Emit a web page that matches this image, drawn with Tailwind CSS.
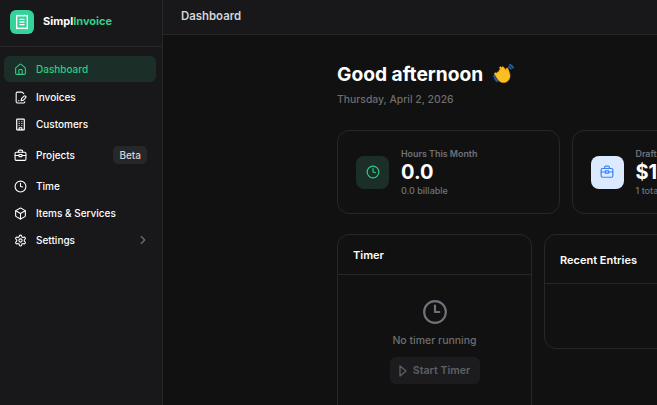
<!DOCTYPE html>
<html><head><meta charset="utf-8"><script src="https://cdn.jsdelivr.net/npm/@tailwindcss/browser@4"></script></head>
<body class="bg-[#111111]">
<div class="flex h-[405px] w-[657px] overflow-hidden bg-[#111111] font-['Inter',sans-serif] text-white">
  <aside class="flex h-full w-[163px] shrink-0 flex-col border-r border-[#27272a] bg-[#18181b]">
    <div class="flex h-[47px] shrink-0 items-center gap-[9px] border-b border-[#27272a] pb-[3px] pl-[10px]">
      <div class="flex h-6 w-6 items-center justify-center rounded-md bg-[#34d399]">
        <svg class="h-4 w-4" viewBox="0 0 24 24" fill="none" stroke="#fff" stroke-width="2" stroke-linecap="round" stroke-linejoin="round"><path d="M4 2v20l2-1 2 1 2-1 2 1 2-1 2 1 2-1 2 1V2l-2 1-2-1-2 1-2-1-2 1-2-1-2 1Z"/><path d="M9 8h6M9 12h6M9 16h6"/></svg>
      </div>
      <div class="text-[11px] font-bold leading-none"><span class="text-white">Simpl</span><span class="text-[#2fd08a]">Invoice</span></div>
    </div>
    <nav class="flex flex-col gap-px pl-1 pr-[6px] pt-[9px] text-[10px] font-medium text-white">
      <a class="flex h-[26px] items-center gap-[9px] rounded-md bg-[#1b2f28] pl-[10px] text-[#2ecc85]">
        <svg class="h-[13px] w-[13px]" viewBox="0 0 24 24" fill="none" stroke="currentColor" stroke-width="2" stroke-linecap="round" stroke-linejoin="round"><path d="M15 21v-8a1 1 0 0 0-1-1h-4a1 1 0 0 0-1 1v8"/><path d="M3 10a2 2 0 0 1 .709-1.528l7-5.999a2 2 0 0 1 2.582 0l7 5.999A2 2 0 0 1 21 10v9a2 2 0 0 1-2 2H5a2 2 0 0 1-2-2z"/></svg>
        Dashboard</a>
      <a class="mt-px flex h-[26px] items-center gap-[9px] pl-[10px]">
        <svg class="h-[13px] w-[13px]" viewBox="0 0 24 24" fill="none" stroke="currentColor" stroke-width="2" stroke-linecap="round" stroke-linejoin="round"><path d="m18 5-2.414-2.414A2 2 0 0 0 14.172 2H6a2 2 0 0 0-2 2v16a2 2 0 0 0 2 2h12a2 2 0 0 0 2-2"/><path d="M21.378 12.626a1 1 0 0 0-3.004-3.004l-4.010 4.012a2 2 0 0 0-.506.854l-.837 2.870a.5.5 0 0 0 .62.62l2.870-.837a2 2 0 0 0 .854-.506z"/><path d="M8 18h1"/></svg>
        Invoices</a>
      <a class="flex h-[26px] items-center gap-[9px] pl-[10px]">
        <svg class="h-[13px] w-[13px]" viewBox="0 0 24 24" fill="none" stroke="currentColor" stroke-width="2.200" stroke-linecap="round" stroke-linejoin="round"><rect x="5" y="2" width="14" height="20" rx="1"/><path d="M9.500 22v-4h5v4M9.500 6h.01M14.500 6h.01M9.500 10h.01M14.500 10h.01M9.500 14h.01M14.500 14h.01"/></svg>
        Customers</a>
      <a class="flex h-[34px] items-center gap-[9px] pl-[10px]">
        <svg class="h-[13px] w-[13px]" viewBox="0 0 24 24" fill="none" stroke="currentColor" stroke-width="2" stroke-linecap="round" stroke-linejoin="round"><path d="M16 6V4a2 2 0 0 0-2-2h-4a2 2 0 0 0-2 2v2"/><rect x="2" y="6" width="20" height="15" rx="2"/><path d="M2 12h7M15 12h7"/><rect x="9" y="10" width="6" height="4" rx="1"/></svg>
        Projects
        <span class="ml-auto mr-[9px] flex h-[18px] items-center rounded-[5px] bg-[#27272a] px-[6px] text-[10px] font-medium text-[#d4d4d8]">Beta</span></a>
      <a class="flex h-[26px] items-center gap-[9px] pl-[10px]">
        <svg class="h-[13px] w-[13px]" viewBox="0 0 24 24" fill="none" stroke="currentColor" stroke-width="2" stroke-linecap="round" stroke-linejoin="round"><circle cx="12" cy="12" r="10"/><path d="M12 6v6l4 1"/></svg>
        Time</a>
      <a class="flex h-[26px] items-center gap-[9px] pl-[10px]">
        <svg class="h-[13px] w-[13px]" viewBox="0 0 24 24" fill="none" stroke="currentColor" stroke-width="2" stroke-linecap="round" stroke-linejoin="round"><path d="M21 8a2 2 0 0 0-1-1.730l-7-4a2 2 0 0 0-2 0l-7 4A2 2 0 0 0 3 8v8a2 2 0 0 0 1 1.730l7 4a2 2 0 0 0 2 0l7-4A2 2 0 0 0 21 16Z"/><path d="m3.300 7 8.700 5 8.700-5M12 22V12"/></svg>
        Items &amp; Services</a>
      <a class="flex h-[26px] items-center gap-[9px] pl-[10px]">
        <svg class="h-[13px] w-[13px]" viewBox="0 0 24 24" fill="none" stroke="currentColor" stroke-width="2" stroke-linecap="round" stroke-linejoin="round"><path d="M12.220 2h-.44a2 2 0 0 0-2 2v.18a2 2 0 0 1-1 1.730l-.43.25a2 2 0 0 1-2 0l-.15-.08a2 2 0 0 0-2.730.73l-.22.38a2 2 0 0 0 .73 2.730l.15.1a2 2 0 0 1 1 1.720v.51a2 2 0 0 1-1 1.740l-.15.09a2 2 0 0 0-.73 2.730l.22.38a2 2 0 0 0 2.730.73l.15-.08a2 2 0 0 1 2 0l.43.25a2 2 0 0 1 1 1.730V20a2 2 0 0 0 2 2h.44a2 2 0 0 0 2-2v-.18a2 2 0 0 1 1-1.730l.43-.25a2 2 0 0 1 2 0l.15.08a2 2 0 0 0 2.730-.73l.22-.39a2 2 0 0 0-.73-2.730l-.15-.08a2 2 0 0 1-1-1.740v-.5a2 2 0 0 1 1-1.740l.15-.09a2 2 0 0 0 .73-2.730l-.22-.38a2 2 0 0 0-2.730-.73l-.15.08a2 2 0 0 1-2 0l-.43-.25a2 2 0 0 1-1-1.730V4a2 2 0 0 0-2-2z"/><circle cx="12" cy="12" r="3"/></svg>
        Settings
        <svg class="ml-auto mr-[6px] h-[14px] w-[14px] text-[#71717a]" viewBox="0 0 24 24" fill="none" stroke="currentColor" stroke-width="2" stroke-linecap="round" stroke-linejoin="round"><path d="m9 18 6-6-6-6"/></svg></a>
    </nav>
  </aside>
  <main class="flex min-w-0 flex-1 flex-col">
    <header class="flex h-[35px] shrink-0 items-center border-b border-[#27272a] bg-[#18181b] pb-px pl-[18px] text-[11.400px] font-semibold text-[#d4d4d8]">Dashboard</header>
    <div class="flex w-[700px] flex-col pl-[174px] pt-[27px]">
      <h1 class="flex items-center gap-[10px] text-[19.200px] leading-[24px] font-bold text-white">Good afternoon
        <svg class="h-[21px] w-[21px]" viewBox="1 1 17.500 17.500"><path d="M2 11c.3 2 1.200 3.400 2.600 4.400M4 10.500c.2 1 .6 2 1.300 2.800M15 1.600c1.200.4 2.200 1.300 2.700 2.500M14.300 3.400c.7.3 1.300.8 1.600 1.500" fill="none" stroke="#1f5fa8" stroke-width="1.500" stroke-linecap="round"/><path d="M6.300 6.900c-.6-.8.5-1.700 1.200-1l-.9-1.300c-.6-.9.7-1.800 1.300-.9l.5.7c-.5-.8.7-1.700 1.300-.9l2.300 3c-.2-1.200-.3-2 .6-2.200.8-.1 1 .7 1.300 1.700.5 1.600 1.700 3.700 1.200 6-.6 3-3.500 5-6.300 4.400-2.200-.4-3.400-2.100-4-3l-2.500-3.800c-.6-.9.700-1.800 1.300-.9z" fill="#fbbf24" stroke="#f59e0b" stroke-width=".5"/></svg></h1>
      <p class="mt-[7px] text-[10.400px] leading-[14px] font-medium text-[#6e6e6e]">Thursday, April 2, 2026</p>
      <div class="mt-[23px] flex gap-3">
        <div class="flex h-[84px] w-[223px] shrink-0 items-center gap-3 rounded-xl border border-[#27272a] pl-[18px]">
          <div class="flex h-[33px] w-[33px] items-center justify-center rounded-lg bg-[#1b2f28]">
            <svg class="h-[14px] w-[14px]" viewBox="0 0 24 24" fill="none" stroke="#2ecc85" stroke-width="2" stroke-linecap="round" stroke-linejoin="round"><circle cx="12" cy="12" r="10"/><path d="M12 6v6l4 1"/></svg>
          </div>
          <div class="flex flex-col">
            <span class="text-[8.900px] leading-[12px] font-semibold text-[#71717a]">Hours This Month</span>
            <span class="text-xl leading-[24px] font-bold text-white">0.0</span>
            <span class="mt-px text-[9px] leading-[12px] font-medium text-[#71717a]">0.0 billable</span>
          </div>
        </div>
        <div class="-ml-[0.500px] flex h-[84px] w-[223px] shrink-0 items-center gap-3 rounded-xl border border-[#27272a] pl-[18px]">
          <div class="flex h-[33px] w-[33px] items-center justify-center rounded-lg bg-[#dbeafe]">
            <svg class="h-[14px] w-[14px]" viewBox="0 0 24 24" fill="none" stroke="#3b82f6" stroke-width="2" stroke-linecap="round" stroke-linejoin="round"><path d="M16 6V4a2 2 0 0 0-2-2h-4a2 2 0 0 0-2 2v2"/><rect x="2" y="6" width="20" height="15" rx="2"/><path d="M2 12h7M15 12h7"/><rect x="9" y="10" width="6" height="4" rx="1"/></svg>
          </div>
          <div class="flex flex-col">
            <span class="text-[8.900px] leading-[12px] font-semibold text-[#71717a]">Draft Invoices</span>
            <span class="text-xl leading-[24px] font-bold text-white">$1,200</span>
            <span class="mt-px text-[9px] leading-[12px] font-medium text-[#71717a]">1 total</span>
          </div>
        </div>
      </div>
      <div class="mt-5 flex items-start gap-3">
        <section class="h-[190px] w-[195px] shrink-0 rounded-xl border border-[#27272a]">
          <div class="flex h-[40px] items-center border-b border-[#27272a] pl-[15px] pt-px text-[11px] font-semibold text-white">Timer</div>
          <div class="flex flex-col items-center pt-[24px]">
            <svg class="h-[26px] w-[26px]" viewBox="0 0 24 24" fill="none" stroke="#71717a" stroke-width="2" stroke-linecap="round" stroke-linejoin="round"><circle cx="12" cy="12" r="10"/><path d="M12 6v6h4"/></svg>
            <p class="mt-[9px] text-[10.500px] leading-[14px] font-medium text-[#6e6e6e]">No timer running</p>
            <div class="mt-[9px] flex h-[27px] w-[90px] items-center justify-center gap-[6px] rounded-md bg-[#1c1c1e] pt-px text-[10.600px] font-semibold text-[#5f5f64]">
              <svg class="h-[12px] w-[8px]" viewBox="0 0 8 12" fill="none" stroke="currentColor" stroke-width="1.300" stroke-linecap="round" stroke-linejoin="round"><path d="M1 1l6 5-6 5z"/></svg>
              Start Timer</div>
          </div>
        </section>
        <section class="h-[115px] w-[300px] shrink-0 rounded-xl border border-[#27272a]">
          <div class="flex h-[49px] items-center border-b border-[#27272a] pl-[15px] pt-[2px] text-[11px] font-semibold text-white">Recent Entries</div>
        </section>
      </div>
    </div>
  </main>
</div>
</body></html>
